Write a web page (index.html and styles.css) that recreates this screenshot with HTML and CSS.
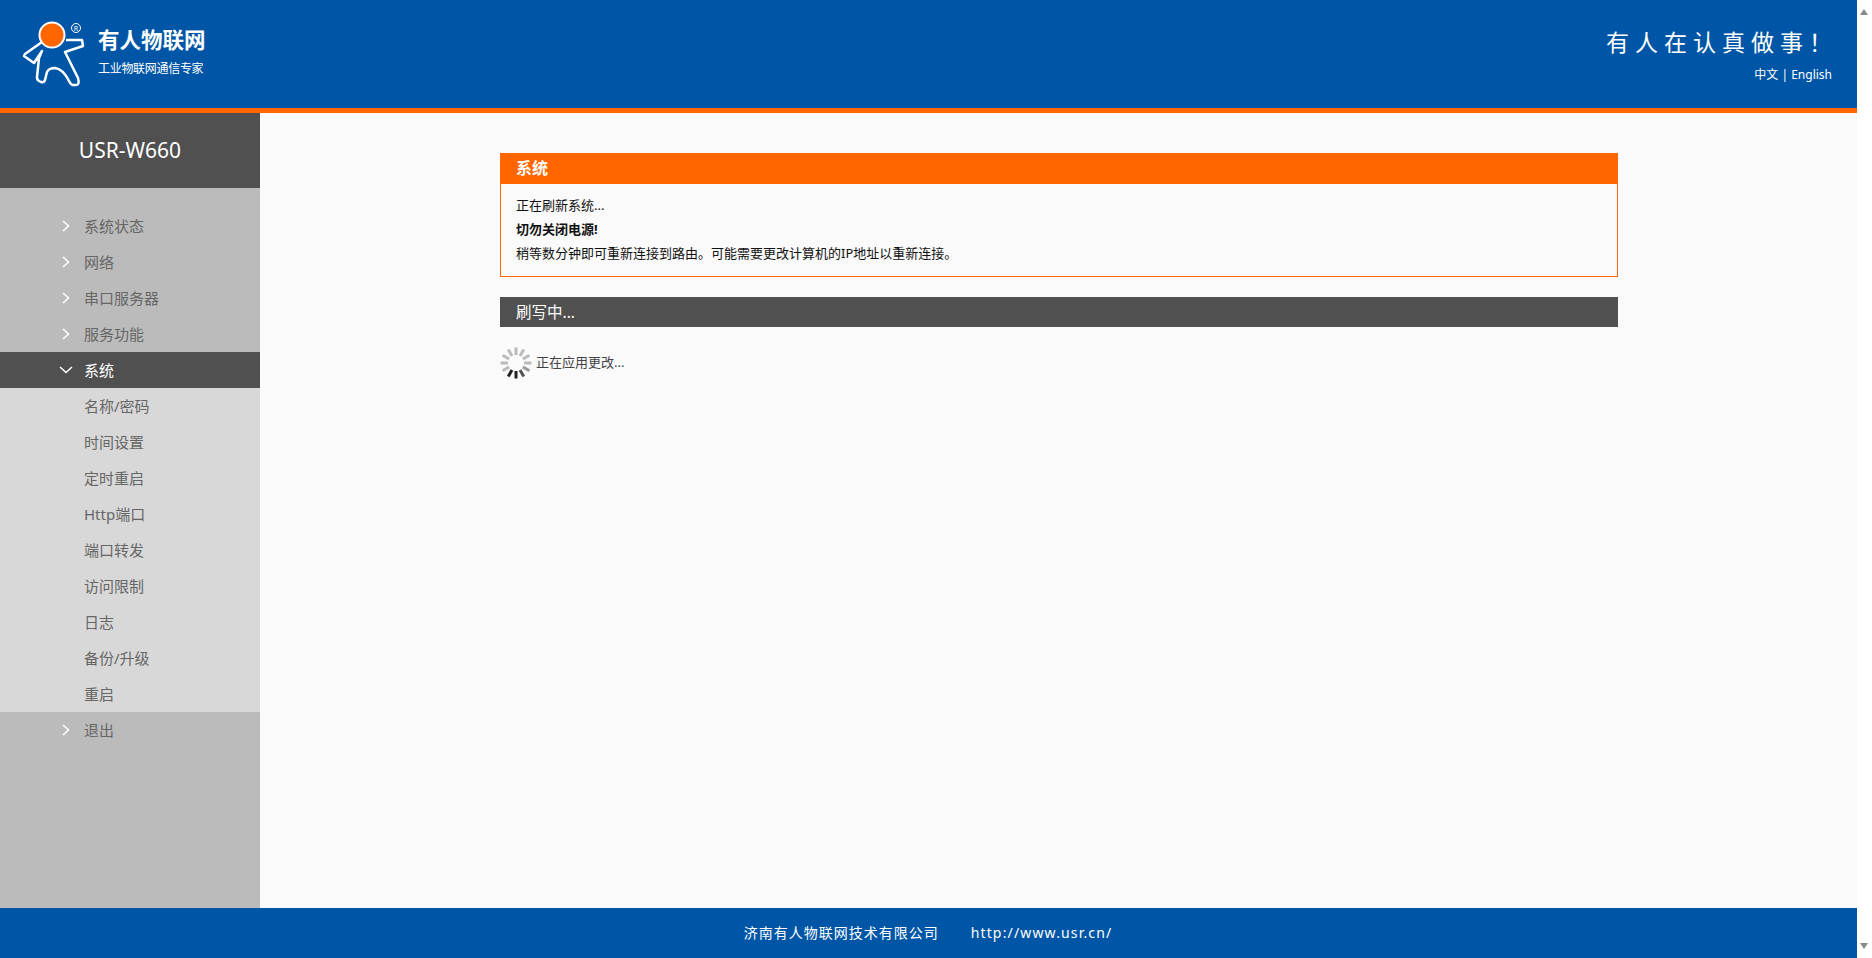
FILE: index.html
```html
<!DOCTYPE html>
<html lang="zh-CN">

<head>
  <meta charset="UTF-8">
  <title>USR-W660</title>
  <link rel="stylesheet" href="styles.css">
</head>

<body>
  <div class="page">
    <header class="top">
      <div class="brand">
        <svg class="logo" width="72" height="80" viewBox="20 15 72 80">
          <path class="logo-body" d="M66 40H82L83 46L65 52L78 78Q80 85 76 85H73Q71 85 69 81Q63 69 55 68Q49 68 47 72L45 80Q44 83 41 82L39 81Q37 80 37 77L39 58L42 51L34 63L24 56L25 54L42 42" />
          <circle class="logo-head" cx="52" cy="35" r="12.500" />
          <circle class="logo-mark" cx="76" cy="28" r="4.500" />
          <text class="logo-r" x="76" y="30.500" text-anchor="middle">R</text>
        </svg>
        <div class="brand-text">
          <div class="brand-name">有人物联网</div>
          <div class="brand-sub">工业物联网通信专家</div>
        </div>
      </div>
      <div class="top-right">
        <div class="slogan">有人在认真做事！</div>
        <div class="lang"><a href="#">中文</a> | <a href="#">English</a></div>
      </div>
    </header>

    <div class="middle">
      <aside class="sidebar">
        <div class="device">USR-W660</div>
        <ul class="menu">
          <li class="menu-item"><svg class="arrow" width="8" height="12" viewBox="0 0 8 12"><path d="M1 1L6.500 6L1 11" /></svg>系统状态</li>
          <li class="menu-item"><svg class="arrow" width="8" height="12" viewBox="0 0 8 12"><path d="M1 1L6.500 6L1 11" /></svg>网络</li>
          <li class="menu-item"><svg class="arrow" width="8" height="12" viewBox="0 0 8 12"><path d="M1 1L6.500 6L1 11" /></svg>串口服务器</li>
          <li class="menu-item"><svg class="arrow" width="8" height="12" viewBox="0 0 8 12"><path d="M1 1L6.500 6L1 11" /></svg>服务功能</li>
          <li class="menu-item active"><svg class="arrow-down" width="14" height="8" viewBox="0 0 14 8"><path d="M1 1L7 6.500L13 1" /></svg>系统</li>
          <li class="sub-item">名称/密码</li>
          <li class="sub-item">时间设置</li>
          <li class="sub-item">定时重启</li>
          <li class="sub-item">Http端口</li>
          <li class="sub-item">端口转发</li>
          <li class="sub-item">访问限制</li>
          <li class="sub-item">日志</li>
          <li class="sub-item">备份/升级</li>
          <li class="sub-item">重启</li>
          <li class="menu-item"><svg class="arrow" width="8" height="12" viewBox="0 0 8 12"><path d="M1 1L6.500 6L1 11" /></svg>退出</li>
        </ul>
      </aside>

      <main class="content">
        <section class="notice">
          <h2 class="notice-title">系统</h2>
          <div class="notice-body">
            <p>正在刷新系统...</p>
            <p><strong>切勿关闭电源!</strong></p>
            <p>稍等数分钟即可重新连接到路由。可能需要更改计算机的IP地址以重新连接。</p>
          </div>
        </section>
        <h2 class="flash-title">刷写中...</h2>
        <div class="status">
          <svg class="spinner" width="32" height="32" viewBox="-16 -16 32 32">
            <line class="s0" x1="0" y1="-8" x2="0" y2="-15.500" transform="rotate(0)" />
            <line class="s0" x1="0" y1="-8" x2="0" y2="-15.500" transform="rotate(30)" />
            <line class="s0" x1="0" y1="-8" x2="0" y2="-15.500" transform="rotate(60)" />
            <line class="s0" x1="0" y1="-8" x2="0" y2="-15.500" transform="rotate(90)" />
            <line class="s1" x1="0" y1="-8" x2="0" y2="-15.500" transform="rotate(120)" />
            <line class="s2" x1="0" y1="-8" x2="0" y2="-15.500" transform="rotate(150)" />
            <line class="s3" x1="0" y1="-8" x2="0" y2="-15.500" transform="rotate(180)" />
            <line class="s3" x1="0" y1="-8" x2="0" y2="-15.500" transform="rotate(210)" />
            <line class="s0" x1="0" y1="-8" x2="0" y2="-15.500" transform="rotate(240)" />
            <line class="s0" x1="0" y1="-8" x2="0" y2="-15.500" transform="rotate(270)" />
            <line class="s0" x1="0" y1="-8" x2="0" y2="-15.500" transform="rotate(300)" />
            <line class="s0" x1="0" y1="-8" x2="0" y2="-15.500" transform="rotate(330)" />
          </svg>
          <span class="status-text">正在应用更改...</span>
        </div>
      </main>
    </div>

    <footer class="bottom">
      <span>济南有人物联网技术有限公司</span>
      <span class="url">http://www.usr.cn/</span>
    </footer>
  </div>

  <div class="scrollbar">
    <span class="scroll-up"></span>
    <span class="scroll-down"></span>
  </div>
</body>

</html>
```

FILE: styles.css
```css
* {
  box-sizing: border-box;
}

html,
body {
  height: 958px;
}

body {
  margin: 0;
  display: flex;
  overflow: hidden;
  background-color: #fff;
  font-family: "Noto Sans", "Noto Sans CJK SC", sans-serif;
  font-size: 13px;
  color: #111;
}

.page {
  flex: 1;
  display: flex;
  flex-direction: column;
  min-width: 0;
}

.top {
  height: 113px;
  flex: none;
  display: flex;
  justify-content: space-between;
  background-color: #0056a6;
  border-bottom: 5px solid #ff6600;
  color: #fff;
}

.brand {
  display: flex;
  padding: 15px 0 0 20px;
}

.logo {
  flex: none;
}

.logo-body {
  fill: none;
  stroke: #fff;
  stroke-width: 2.5;
  stroke-linejoin: round;
}

.logo-head {
  fill: #ff6600;
  stroke: #fff;
  stroke-width: 2;
}

.logo-mark {
  fill: none;
  stroke: #fff;
  stroke-width: 1;
}

.logo-r {
  font-size: 7px;
  fill: #fff;
}

.brand-text {
  padding: 11px 0 0 6px;
}

.brand-name {
  font-size: 21.500px;
  font-weight: 700;
  line-height: 28px;
}

.brand-sub {
  font-size: 12px;
  letter-spacing: -0.300px;
  line-height: 17px;
  margin-top: 6px;
}

.top-right {
  padding: 26px 25px 0 0;
  text-align: right;
}

.slogan {
  margin-right: -6px;
  font-size: 23px;
  letter-spacing: 6px;
  line-height: 32px;
}

.lang {
  font-size: 12px;
  line-height: 18px;
  margin-top: 8px;
}

.lang a {
  color: #fff;
  text-decoration: none;
}

.middle {
  flex: 1;
  display: flex;
  min-height: 0;
}

.sidebar {
  width: 260px;
  flex: none;
  background-color: #bbb;
}

.device {
  height: 75px;
  background-color: #505050;
  color: #fff;
  font-size: 21px;
  line-height: 74px;
  text-align: center;
}

.menu {
  list-style: none;
  margin: 20px 0 0;
  padding: 0;
}

.menu-item,
.sub-item {
  position: relative;
  height: 36px;
  padding-left: 84px;
  font-size: 15px;
  line-height: 36px;
  color: #666;
}

.sub-item {
  background-color: #d8d8d8;
}

.menu-item.active {
  background-color: #505050;
  color: #fff;
}

.arrow,
.arrow-down {
  position: absolute;
  fill: none;
  stroke: #fff;
  stroke-width: 1.500;
}

.arrow {
  left: 62px;
  top: 12px;
}

.arrow-down {
  left: 59px;
  top: 14px;
}

.content {
  flex: 1;
  min-width: 0;
  padding: 40px 239px 0 240px;
  background-color: #fafafa;
}

.notice {
  border: 1px solid #ff6600;
  height: 124px;
}

.notice-title {
  margin: 0;
  height: 30px;
  padding-left: 15px;
  background-color: #ff6600;
  color: #fff;
  font-size: 16px;
  font-weight: 700;
  line-height: 28px;
}

.notice-body {
  padding: 9px 15px 0;
  line-height: 24px;
}

.notice-body p {
  margin: 0;
}

.flash-title {
  margin: 20px 0 0;
  height: 30px;
  padding-left: 16px;
  background-color: #505050;
  color: #fff;
  font-size: 15.500px;
  font-weight: 400;
  line-height: 30px;
}

.status {
  display: flex;
  align-items: center;
  gap: 4px;
  margin-top: 20px;
  color: #444;
}

.status-text {
  margin-bottom: 3px;
}

.spinner {
  flex: none;
}

.spinner line {
  stroke-width: 3;
}

.s0 {
  stroke: #bbb;
}

.s1 {
  stroke: #999;
}

.s2 {
  stroke: #555;
}

.s3 {
  stroke: #222;
}

.bottom {
  height: 50px;
  flex: none;
  display: flex;
  justify-content: center;
  align-items: center;
  gap: 32px;
  padding: 0 1px 2px 0;
  background-color: #0056a6;
  color: #fff;
  font-size: 14px;
  letter-spacing: 1px;
}

.url {
  letter-spacing: 1.150px;
}

.scrollbar {
  width: 15px;
  flex: none;
  display: flex;
  flex-direction: column;
  justify-content: space-between;
  padding: 9px 3px;
  background-color: #fff;
}

.scroll-up,
.scroll-down {
  width: 0;
  height: 0;
  border-left: 4.500px solid transparent;
  border-right: 4.500px solid transparent;
}

.scroll-up {
  border-bottom: 6px solid #8a8a8a;
}

.scroll-down {
  border-top: 6px solid #8a8a8a;
}
```
